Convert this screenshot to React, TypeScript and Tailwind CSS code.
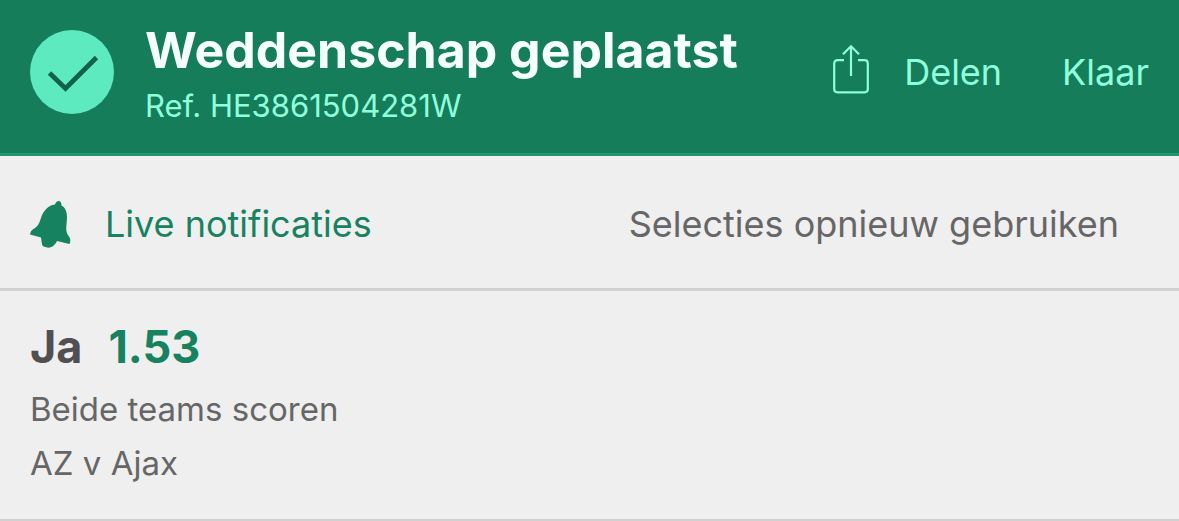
import React from 'react';

function CheckBadge() {
  return (
    <svg viewBox="0 0 84 84" className="size-[84px] shrink-0" role="img" aria-label="Bevestigd">
      <circle cx="42" cy="42" r="42" fill="#5eeabf" />
      <path d="M19.5 43L35.500 58.500L66.500 27.500" fill="none" stroke="#14614a" strokeWidth="4.8" />
    </svg>
  );
}

function ShareIcon() {
  return (
    <svg viewBox="0 0 36 56" className="h-14 w-9 shrink-0" fill="none" stroke="#8fffdc" strokeWidth="2.2" aria-hidden="true">
      <path d="M11 16.2H4.5Q1.2 16.2 1.2 19.5V45Q1.2 48.3 4.5 48.3H31.5Q34.8 48.3 34.8 45V19.5Q34.8 16.2 31.5 16.2H25" />
      <path d="M18 32V2.3M10 10.3L18 2.3L26 10.3" />
    </svg>
  );
}

function BellIcon() {
  return (
    <svg viewBox="0 0 42 48" className="h-12 w-[42px] shrink-0" fill="#178260" aria-hidden="true">
      <path d="M25 4.500C25.700 2.300 27 1 28.700 1C30.600 1 31.500 3 31.500 5.500C35 7.500 37 11.500 37 17C37 22 36 26 36.300 30C36.700 33.500 38 35 39.600 37.500C40.600 39.500 40.500 42 39.500 44L27 41C25.500 44.500 22.500 47.500 18.500 47.800C15.500 46.700 12.800 47.200 12 44.500L11 37.500L0 34.500C.5 31 2 29.700 5 28C8.500 25.500 9.500 22.500 11 18C13 11.500 17.500 5.500 25 4.500Z" />
    </svg>
  );
}

export default function App() {
  return (
    <main className="bg-[#efefef] font-['Inter',sans-serif] text-[#666666]">
      <header className="flex items-center justify-between border-b-3 border-[#219570] bg-[#167d5b] px-[30px] pt-5 pb-[29px]">
        <div className="flex items-center gap-[31px]">
          <CheckBadge />
          <div>
            <h1 className="text-[50px] leading-[60px] font-bold whitespace-nowrap text-[#f5fffc]">Weddenschap geplaatst</h1>
            <p className="pt-2 text-[31px] leading-9 whitespace-nowrap text-[#8fffdc]">Ref. HE3861504281W</p>
          </div>
        </div>
        <div className="flex items-center gap-[60px] text-4xl text-[#8fffdc]">
          <button type="button" className="flex items-center gap-[35px]">
            <ShareIcon />
            Delen
          </button>
          <button type="button">Klaar</button>
        </div>
      </header>

      <div className="flex items-center justify-between border-b-3 border-[#d1d1d1] pt-11 pr-[60px] pb-10 pl-[30px] text-4xl">
        <button type="button" className="flex items-center gap-[33px] text-[#178260]">
          <BellIcon />
          Live notificaties
        </button>
        <button type="button">Selecties opnieuw gebruiken</button>
      </div>

      <section className="border-b-2 border-[#d1d1d1] px-[30px] pt-[21px] pb-[29px]">
        <h2 className="flex gap-[26px] text-[45px] leading-[70px] font-bold text-[#505050]">
          <span>Ja</span>
          <span className="text-[#178260]">1.53</span>
        </h2>
        <p className="text-[33px] leading-[54px]">Beide teams scoren</p>
        <p className="text-[33px] leading-[54px]">AZ v Ajax</p>
      </section>
    </main>
  );
}
